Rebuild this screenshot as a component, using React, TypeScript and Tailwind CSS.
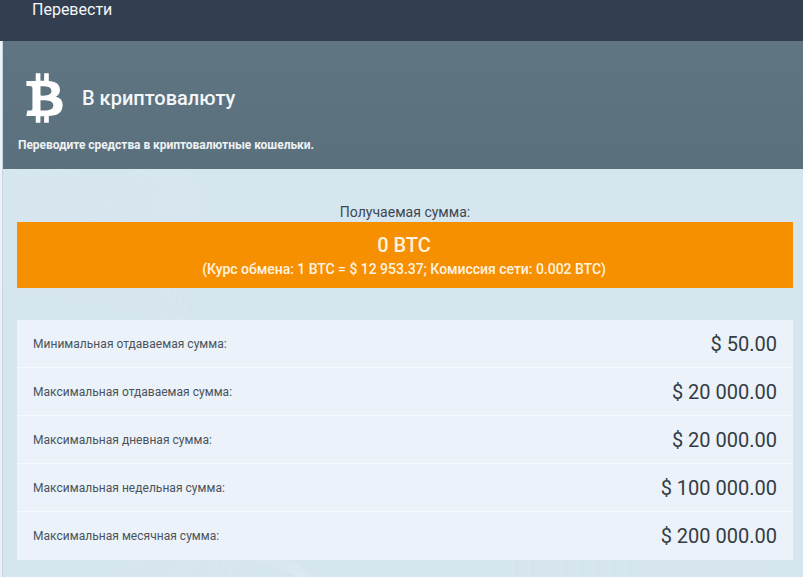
import React from 'react';
import { FaBtc } from 'react-icons/fa';

const limits = [
  { label: 'Минимальная отдаваемая сумма:', value: '$ 50.00' },
  { label: 'Максимальная отдаваемая сумма:', value: '$ 20 000.00' },
  { label: 'Максимальная дневная сумма:', value: '$ 20 000.00' },
  { label: 'Максимальная недельная сумма:', value: '$ 100 000.00' },
  { label: 'Максимальная месячная сумма:', value: '$ 200 000.00' },
];

const steps = Array.from({ length: 16 }, (_, i) => i * 9);

// faint chevron texture behind the panel body
function Texture() {
  return (
    <svg className="absolute inset-0 h-full w-full" viewBox="0 0 801 408" fill="none" stroke="#ffffff" strokeOpacity="0.12">
      {steps.map((d) => (
        <path key={`a${d}`} d={`M0 ${d - 20} L${100 + d * 0.6} ${d + 15} L${170 + d * 0.2} ${-10 + d * 0.2}`} />
      ))}
      {steps.map((d) => (
        <path key={`b${d}`} d={`M${60 + d} 150 V${240 + d * 0.3}`} />
      ))}
      {steps.map((d) => (
        <path key={`c${d}`} d={`M${110 + d} 408 L${205 + d * 0.2} ${330 + d * 0.4} L${310 - d * 0.1} 408`} />
      ))}
      {steps.map((d) => (
        <path key={`d${d}`} d={`M${510 + d * 1.8} 408 V${250 - d * 0.5}`} />
      ))}
    </svg>
  );
}

export default function App() {
  return (
    <div className="h-[577px] w-[803px] overflow-hidden bg-[#eef2f6] font-['Roboto',sans-serif]">
      <div className="h-[41px] bg-[#323e50] pl-8 text-[16px] leading-[19px] text-[#f4f6f8]">
        Перевести
      </div>

      <div className="ml-[2px] h-[536px] border-l border-[#c6d5e2] bg-[#d6e6ef]">
        <div className="h-[128px] bg-linear-to-b from-[#5f7582] to-[#5a707d] pt-[28px] pl-[15px]">
          <div className="flex h-[58px] items-center">
            <FaBtc className="ml-[8px] h-[50px] w-[37px] text-white" />
            <span className="ml-[19px] text-[20px] font-medium text-[#f4f7f9]">В криптовалюту</span>
          </div>
          <p className="mt-[10px] text-[12px] leading-[16px] font-bold tracking-[-0.05px] text-[#eef2f4]">
            Переводите средства в криптовалютные кошельки.
          </p>
        </div>

        <div className="relative h-[408px] pt-[34px] pr-[10px] pl-[14px]">
          <Texture />
          <div className="relative">
            <p className="text-center text-[14px] leading-[19px] tracking-[0.02px] text-[#3d4650]">Получаемая сумма:</p>

            <div className="flex h-[66px] flex-col items-center bg-[#f79000] pt-[11px] pr-[2px] text-[#fff3e0]">
              <span className="text-[20px] leading-[24px] font-medium">0 BTC</span>
              <span className="mt-[2px] text-[14px] leading-[20px] font-medium tracking-[-0.03px]">
                (Курс обмена: 1 BTC = $ 12 953.37; Комиссия сети: 0.002 BTC)
              </span>
            </div>

            <div className="mt-8 bg-[#edf3fa]/90">
              {limits.map((row, i) => (
                <div
                  key={row.label}
                  className={`flex h-[48px] items-center justify-between pr-[16px] pl-4 ${
                    i < limits.length - 1 ? 'border-b border-[#f8fbfd]' : ''
                  }`}
                >
                  <span className="text-[12px] tracking-[0.03px] text-[#4a525b]">{row.label}</span>
                  <span className="text-[20px] text-[#343c45]">{row.value}</span>
                </div>
              ))}
            </div>
          </div>
        </div>
      </div>
    </div>
  );
}
